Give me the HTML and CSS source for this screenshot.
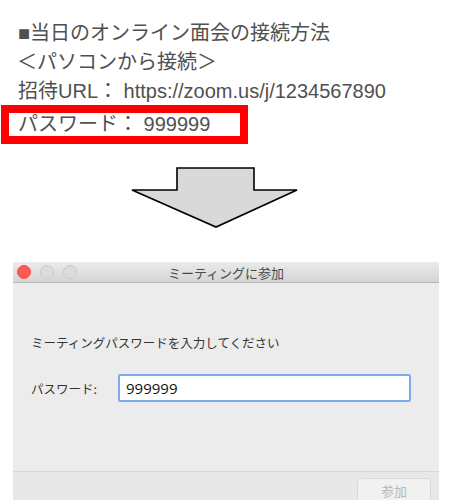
FILE: index.html
```html
<!DOCTYPE html>
<html lang="ja">
  <head>
    <meta charset="UTF-8" />
    <meta name="viewport" content="width=device-width, initial-scale=1.0" />
    <title>パスワード入力</title>
    <link rel="stylesheet" href="styles.css">
  </head>
  <body>
    <div class="memo">
      <div class="line">■当日のオンライン面会の接続方法</div>
      <div class="line indent">＜パソコンから接続＞</div>
      <div class="line">招待URL： https://zoom.us/j/1234567890</div>
      <div class="highlight">
        <span>パスワード： 999999</span>
      </div>
    </div>

    <div class="arrow">
      <svg width="454" height="80" viewBox="0 0 454 80">
        <polygon points="177,8 254,8 254,30 297,30 216,67 132,30 177,30"
                 fill="#d9d9d9" stroke="#000" stroke-width="1.6" stroke-linejoin="miter" />
      </svg>
    </div>

    <div class="window">
      <div class="titlebar">
        <div class="lights">
          <span class="light red"></span>
          <span class="light"></span>
          <span class="light"></span>
        </div>
        <span class="title">ミーティングに参加</span>
      </div>
      <div class="content">
        <p class="prompt">ミーティングパスワードを入力してください</p>
        <div class="field">
          <label>パスワード:</label>
          <div class="input">999999</div>
        </div>
      </div>
      <div class="footer">
        <div class="button">参加</div>
      </div>
    </div>
  </body>
</html>
```

FILE: styles.css
```css
body {
  margin: 0;
  background: #fff;
  overflow: hidden;
  height: 500px;
  font-family: "Noto Sans CJK JP", "Liberation Sans", sans-serif;
}

.memo {
  padding-top: 19px;
  color: #505050;
  font-size: 20px;
  font-family: "Liberation Sans", "Noto Sans CJK JP", sans-serif;
}
.line {
  padding-left: 18px;
  height: 29px;
  line-height: 29px;
}
.line.indent {
  padding-left: 17px;
}
.highlight {
  margin-left: 1px;
  width: 231px;
  height: 23px;
  border: 8px solid #ff0000;
  line-height: 23px;
  margin-top: -1px;
}
.highlight span {
  padding-left: 9px;
}

.arrow {
  height: 102px;
  margin-top: 16px;
}
.arrow svg {
  display: block;
}

.window {
  margin: 0 15px 0 13px;
  background: #ececec;
}
.titlebar {
  height: 20px;
  background: linear-gradient(#ebebeb, #d5d5d5);
  border-bottom: 1px solid #b8b8b8;
  display: flex;
  align-items: center;
  justify-content: center;
  position: relative;
}
.lights {
  position: absolute;
  left: 4px;
  top: 3px;
  display: flex;
  gap: 9px;
}
.light {
  width: 12px;
  height: 12px;
  border-radius: 50%;
  background: #dcdcdc;
  border: 1px solid #cacaca;
}
.light.red {
  background: #fc5b53;
  border-color: #f0514a;
}
.title {
  font-size: 13px;
  color: #4a4a4a;
}

.content {
  height: 188px;
  padding: 0 18px;
  box-sizing: border-box;
  overflow: hidden;
}
.prompt {
  margin: 0;
  padding-top: 51px;
  font-size: 12.5px;
  color: #333;
  line-height: 18px;
}
.field {
  display: flex;
  align-items: center;
  margin-top: 22px;
}
.field label {
  font-size: 12.5px;
  color: #333;
  width: 87px;
}
.input {
  width: 283px;
  height: 24px;
  background: #fff;
  border: 2px solid #7ea9ec;
  border-radius: 2px;
  font-family: "Open Sans", "Liberation Sans", sans-serif;
  font-size: 15px;
  line-height: 24px;
  padding-left: 6px;
  color: #111;
}

.footer {
  border-top: 1px solid #d7d7d7;
  background: #e8e8e8;
  height: 40px;
  display: flex;
  justify-content: flex-end;
  padding: 6px 8px 0 0;
}
.button {
  width: 72px;
  height: 24px;
  border: 1px solid #dadada;
  border-radius: 4px;
  background: #f1f1f1;
  color: #b7b7b7;
  font-size: 13px;
  text-align: center;
  line-height: 24px;
}
```
